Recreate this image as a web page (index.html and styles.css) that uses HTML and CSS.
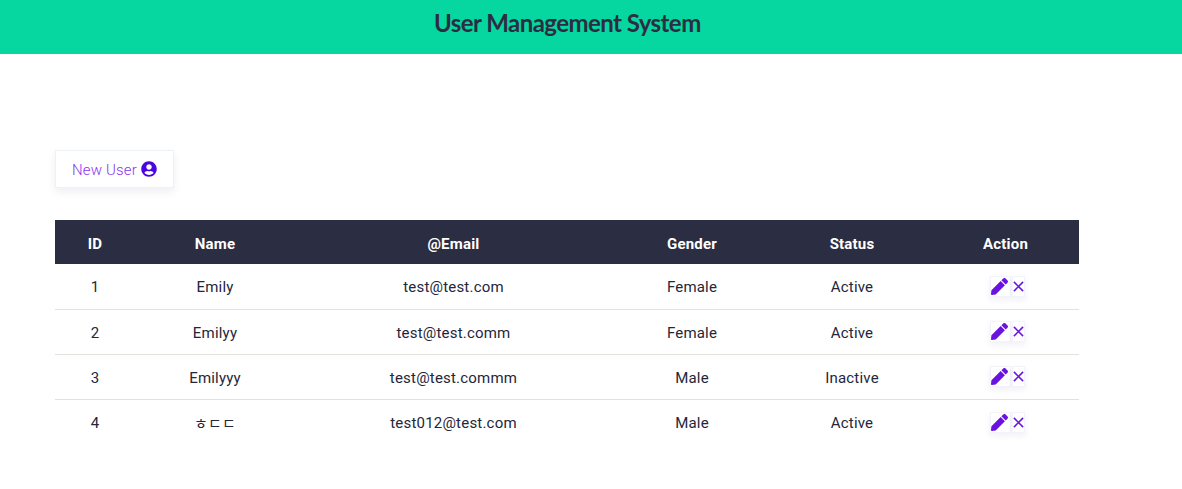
FILE: index.html
```html
<!DOCTYPE html>
<html lang="en">
<head>
<meta charset="utf-8">
<title>User Management System</title>
<link rel="stylesheet" href="styles.css">
</head>
<body>
<header class="topbar"><h1 class="title">User Management System</h1></header>
<main class="content">
  <button class="new-user" type="button"><span class="label">New User</span>
    <svg class="user-icon" viewBox="0 0 496 512"><path d="M248 8C111 8 0 119 0 256s111 248 248 248 248-111 248-248S385 8 248 8zm0 96c48.600 0 88 39.400 88 88s-39.400 88-88 88-88-39.400-88-88 39.400-88 88-88zm0 344c-58.700 0-111.300-26.600-146.500-68.200 18.800-35.400 55.600-59.800 98.500-59.800 2.400 0 4.800.4 7.100 1.100 13 4.200 26.600 6.900 40.900 6.900 14.300 0 28-2.700 40.900-6.900 2.300-.7 4.700-1.100 7.100-1.100 42.900 0 79.700 24.400 98.500 59.800C359.300 421.400 306.700 448 248 448z"/></svg>
  </button>
  <table class="users">
    <colgroup><col class="c-id"><col class="c-name"><col class="c-email"><col class="c-gender"><col class="c-status"><col class="c-action"></colgroup>
    <thead><tr><th>ID</th><th>Name</th><th>@Email</th><th>Gender</th><th>Status</th><th>Action</th></tr></thead>
    <tbody>
      <tr><td>1</td><td>Emily</td><td>test@test.com</td><td>Female</td><td>Active</td><td><span class="actions"><a class="act act-edit"><svg viewBox="0 0 512 512"><path d="M290.740 93.240l128.020 128.020-277.990 277.990-114.140 12.600C11.350 513.540-1.560 500.620.14 485.340l12.700-114.220 277.900-277.880zm207.200-19.060l-60.110-60.110c-18.750-18.750-49.160-18.750-67.910 0l-56.550 56.550 128.020 128.020 56.550-56.550c18.750-18.760 18.750-49.160 0-67.910z"/></svg></a><a class="act act-del"><svg viewBox="0 0 12 12"><path d="M1 1l10 10M11 1L1 11"/></svg></a></span></td></tr>
      <tr><td>2</td><td>Emilyy</td><td>test@test.comm</td><td>Female</td><td>Active</td><td><span class="actions"><a class="act act-edit"><svg viewBox="0 0 512 512"><path d="M290.740 93.240l128.020 128.020-277.990 277.990-114.140 12.600C11.350 513.540-1.560 500.620.14 485.340l12.700-114.220 277.900-277.880zm207.200-19.060l-60.110-60.110c-18.750-18.750-49.160-18.750-67.910 0l-56.550 56.550 128.020 128.020 56.550-56.550c18.750-18.760 18.750-49.160 0-67.910z"/></svg></a><a class="act act-del"><svg viewBox="0 0 12 12"><path d="M1 1l10 10M11 1L1 11"/></svg></a></span></td></tr>
      <tr><td>3</td><td>Emilyyy</td><td>test@test.commm</td><td>Male</td><td>Inactive</td><td><span class="actions"><a class="act act-edit"><svg viewBox="0 0 512 512"><path d="M290.740 93.240l128.020 128.020-277.990 277.990-114.140 12.600C11.350 513.540-1.560 500.620.14 485.340l12.700-114.220 277.900-277.880zm207.200-19.060l-60.110-60.110c-18.750-18.750-49.160-18.750-67.910 0l-56.550 56.550 128.020 128.020 56.550-56.550c18.750-18.760 18.750-49.160 0-67.910z"/></svg></a><a class="act act-del"><svg viewBox="0 0 12 12"><path d="M1 1l10 10M11 1L1 11"/></svg></a></span></td></tr>
      <tr><td>4</td><td>ㅎㄷㄷ</td><td>test012@test.com</td><td>Male</td><td>Active</td><td><span class="actions"><a class="act act-edit"><svg viewBox="0 0 512 512"><path d="M290.740 93.240l128.020 128.020-277.990 277.990-114.140 12.600C11.350 513.540-1.560 500.620.14 485.340l12.700-114.220 277.900-277.880zm207.200-19.060l-60.110-60.110c-18.750-18.750-49.160-18.750-67.910 0l-56.550 56.550 128.020 128.020 56.550-56.550c18.750-18.760 18.750-49.160 0-67.910z"/></svg></a><a class="act act-del"><svg viewBox="0 0 12 12"><path d="M1 1l10 10M11 1L1 11"/></svg></a></span></td></tr>
    </tbody>
  </table>
</main>
</body>
</html>
```
FILE: styles.css
```css
* { box-sizing: border-box; }
html, body { margin: 0; background: #fff; }
body { font-family: Roboto, "Noto Sans CJK KR", sans-serif; color: #2b2d42; }
.topbar { height: 54px; background: #06d6a0; padding-left: 434px; display: flex; align-items: center; }
.title { margin: 0 0 8px; font: 700 24px/1.2 Lato, sans-serif; letter-spacing: -.55px; color: #2b2d42; white-space: nowrap; }
.content { padding: 96px 103px 0 55px; }
.new-user { display: flex; align-items: center; gap: 4px; width: 119px; height: 38px; padding: 0 0 0 16px; background: #fff; border: 1px solid #edf2f7; box-shadow: 0 4px 8px rgba(45, 55, 110, .08); font: 300 15px Roboto, sans-serif; letter-spacing: .15px; color: #8a35f0; }
.label { padding-top: 1px; }
.user-icon { width: 16px; height: 16px; fill: #4a05e0; }
.users { margin-top: 32px; width: 1024px; table-layout: fixed; border-collapse: collapse; font-size: 15px; letter-spacing: .2px; }
.c-id { width: 80px; } .c-name { width: 160px; } .c-email { width: 317px; } .c-gender { width: 160px; } .c-status { width: 160px; } .c-action { width: 147px; }
.users th { height: 44px; padding: 3px 0 0; background: #2b2d42; color: #fff; font-weight: 700; text-align: center; }
.users td { height: 45px; padding: 2px 0 0; text-align: center; font-weight: 400; color: #24263a; border-bottom: 1px solid #e2e2da; }
.users tbody tr:last-child td { border-bottom: 0; }
.actions { display: inline-flex; vertical-align: middle; gap: 1px; margin: -2px 0 0 3px; }
.act { display: flex; align-items: center; justify-content: center; height: 21px; border: 1px solid #f3f4f9; background: #fff; box-shadow: 0 3px 6px rgba(60, 60, 160, .08); }
.act-edit { width: 21px; }
.act-edit svg { width: 17px; height: 17px; margin-left: -1px; fill: #6a12e0; }
.act-del { width: 13px; }
.act-del svg { width: 11px; height: 11px; fill: none; stroke: #6a12e0; stroke-width: 1.7; }
```
